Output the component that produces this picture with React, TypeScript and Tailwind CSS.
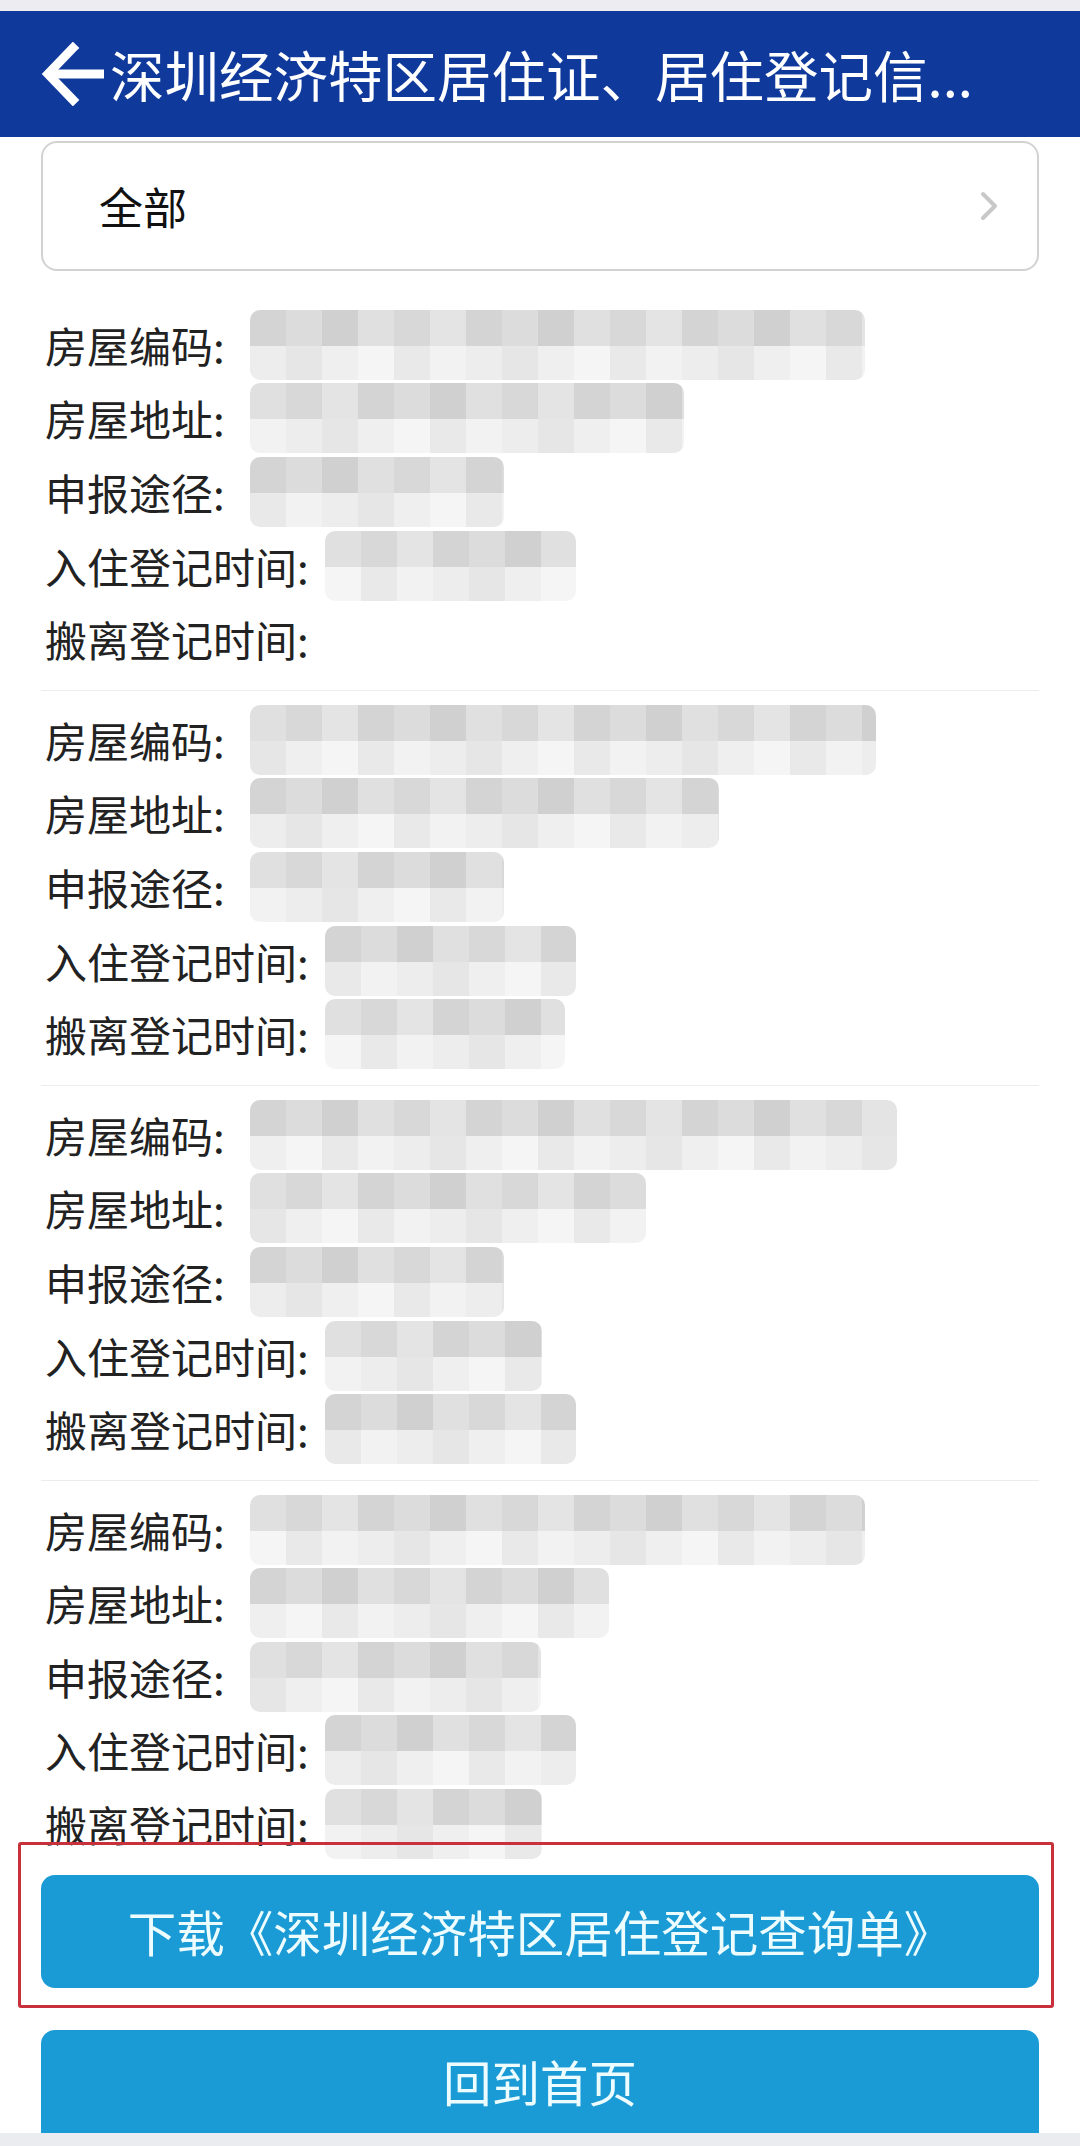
import React from "react";

const FONT = { fontFamily: '"Noto Sans CJK SC", "Noto Sans", sans-serif' };

const TOP_SHADES = [
  "bg-[#d4d4d4]",
  "bg-[#dcdcdc]",
  "bg-[#d0d0d0]",
  "bg-[#e0e0e0]",
  "bg-[#d8d8d8]",
  "bg-[#e4e4e4]",
];
const BOTTOM_SHADES = [
  "bg-[#ededed]",
  "bg-[#f2f2f2]",
  "bg-[#e9e9e9]",
  "bg-[#f5f5f5]",
  "bg-[#efefef]",
  "bg-[#e6e6e6]",
];

const LABELS = ["房屋编码:", "房屋地址:", "申报途径:", "入住登记时间:", "搬离登记时间:"];

// widths of the blurred values, per record
const RECORDS = [
  [615, 434, 254, 251, 0],
  [626, 469, 254, 251, 240],
  [647, 396, 254, 217, 251],
  [615, 359, 291, 251, 217],
];

function Mosaic({ width, seed, wide }: { width: number; seed: number; wide: boolean }) {
  const cells = Math.ceil(width / 36);
  const idx = Array.from({ length: cells }, (_, i) => i);
  return (
    <div
      className={`${wide ? "ml-[16px]" : "ml-[25px]"} flex h-[70px] flex-col overflow-hidden rounded-[10px] blur-[0.6px]`}
      style={{ width }}
    >
      <div className="flex h-[36px]">
        {idx.map((i) => (
          <div
            key={i}
            className={`h-full w-[36px] shrink-0 ${TOP_SHADES[(i * 7 + seed * 3) % TOP_SHADES.length]}`}
          />
        ))}
      </div>
      <div className="flex h-[34px]">
        {idx.map((i) => (
          <div
            key={i}
            className={`h-full w-[36px] shrink-0 ${BOTTOM_SHADES[(i * 5 + seed) % BOTTOM_SHADES.length]}`}
          />
        ))}
      </div>
    </div>
  );
}

function Record({ widths, n, last }: { widths: number[]; n: number; last: boolean }) {
  return (
    <div
      className={`${n === 0 ? "" : "pt-[12px]"} ${
        last ? "" : "border-b border-[#ececec] pb-[14px]"
      }`}
    >
      {LABELS.map((label, i) => (
        <div key={label} className="flex h-[73.6px] items-center pl-[4px]">
          <span className="whitespace-nowrap text-[42px] leading-none text-[#222222]">
            {label}
          </span>
          {widths[i] > 0 && <Mosaic width={widths[i]} seed={n * 5 + i} wide={i > 2} />}
        </div>
      ))}
    </div>
  );
}

export default function App() {
  return (
    <div className="relative h-[2146px] w-[1080px] overflow-hidden bg-white" style={FONT}>
      <div className="h-[11px] bg-[#ececf1]" />

      {/* Header */}
      <div className="flex h-[126px] items-center bg-[#0f3a9c] pl-[40px]">
        <svg width="66" height="64" viewBox="0 0 66 64" className="shrink-0">
          <path
            d="M33 6 L8 32 L33 58"
            fill="none"
            stroke="white"
            strokeWidth="9"
            strokeLinecap="square"
            strokeLinejoin="miter"
          />
          <path d="M10 32 H64" stroke="white" strokeWidth="9" />
        </svg>
        <span className="ml-[4px] whitespace-nowrap text-[54.5px] leading-none text-white">
          深圳经济特区居住证、居住登记信...
        </span>
      </div>

      {/* Filter card */}
      <div className="mx-[41px] mt-[4px] flex h-[130px] items-center justify-between rounded-[16px] border-2 border-[#d2d2d2] pl-[56px] pr-[38px]">
        <span className="text-[44px] leading-none text-[#111111]">全部</span>
        <svg width="20" height="30" viewBox="0 0 20 30">
          <path
            d="M4 3 L16 15 L4 27"
            fill="none"
            stroke="#c8c8c8"
            strokeWidth="4"
            strokeLinecap="round"
            strokeLinejoin="round"
          />
        </svg>
      </div>

      {/* Records */}
      <div className="mx-[41px] mt-[37px]">
        {RECORDS.map((w, n) => (
          <Record key={n} widths={w} n={n} last={n === RECORDS.length - 1} />
        ))}
      </div>

      {/* Buttons */}
      <div className="mx-[41px] mt-[14px] flex h-[113px] items-center justify-center rounded-[14px] bg-[#1b9bd5]">
        <span className="whitespace-nowrap text-[48.5px] leading-none text-[#ecfcff]">
          下载《深圳经济特区居住登记查询单》
        </span>
      </div>
      <div className="mx-[41px] mt-[42px] flex h-[103px] items-center justify-center rounded-t-[14px] bg-[#1b9bd5]">
        <span className="text-[48.5px] leading-none text-[#ecfcff]">回到首页</span>
      </div>
      <div className="h-[13px] bg-[#ebecef]" />

      {/* Annotation box */}
      <div className="absolute left-[18px] top-[1842px] h-[166px] w-[1036px] rounded-[3px] border-[3px] border-[#c8313b]" />
    </div>
  );
}
